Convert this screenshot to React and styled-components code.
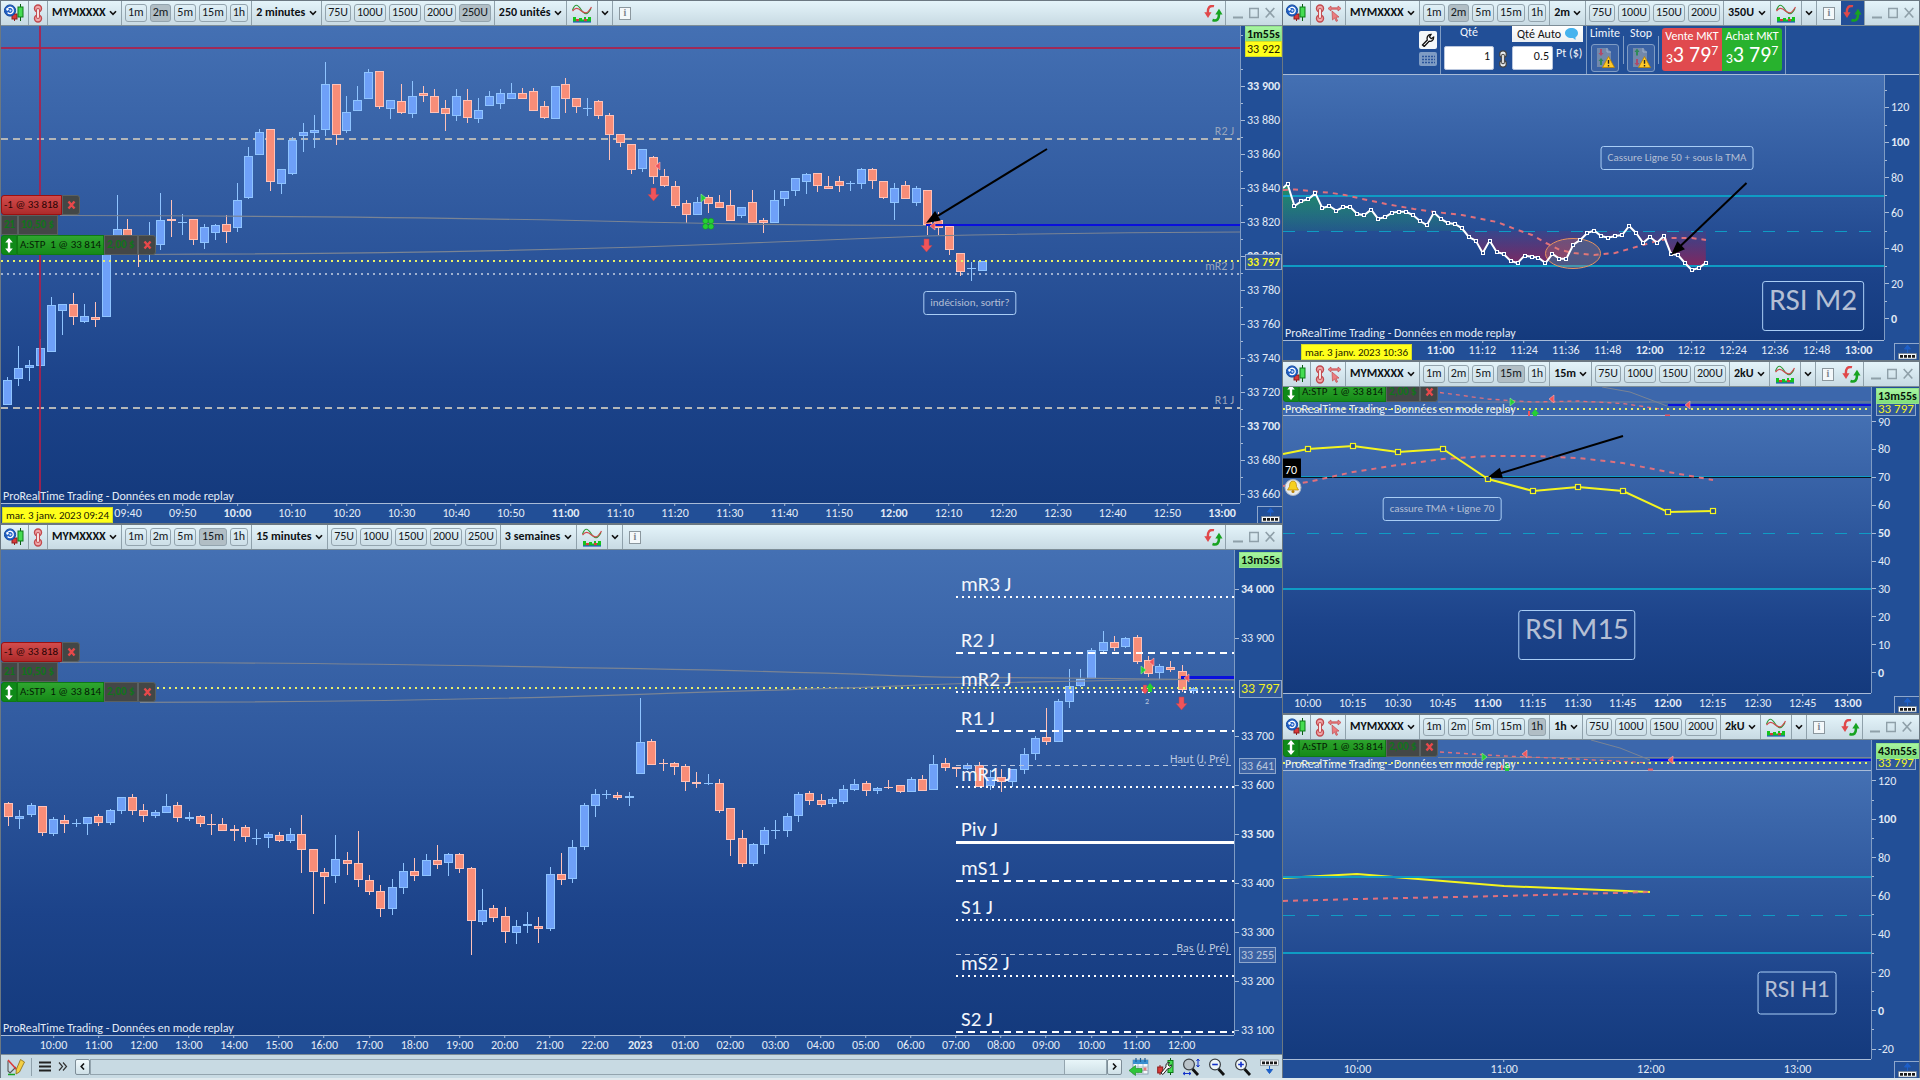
import React, { createContext, useContext } from "react";
import styled, { createGlobalStyle, css } from "styled-components";

const FONT = '"Carlito", "Lato", "Noto Sans", sans-serif';

const GlobalStyle = createGlobalStyle`
  *, *::before, *::after { box-sizing: border-box; }
  body { margin: 0; background: #6b7882; font: 12px/14px ${FONT}; color: #e3ebf6; }
  button, input, select { font: inherit; color: inherit; }
`;

/* ---------- workspace ---------- */

const Workspace = styled.main`
  display: grid;
  grid-template-columns: minmax(0, 1282fr) minmax(0, 637fr);
  column-gap: 1px;
  height: 100vh;
  padding-top: 1px;
  overflow: hidden;
  border-bottom: 2px solid #e0eaee;
`;

const Column = styled.div`
  display: grid;
  grid-template-rows: ${(p) => p.$rows};
  row-gap: 2px;
  min-height: 0;
`;

const WindowFrame = styled.section`
  display: flex;
  flex-direction: column;
  min-width: 0;
  min-height: 0;
  background: #224f97;
  border: solid #6b7882;
  border-width: ${(p) => (p.$edge === "left" ? "0 0 0 1px" : "0 1px 0 0")};
`;

/* ---------- toolbar ---------- */

const Toolbar = styled.header`
  display: flex;
  flex: none;
  height: 25px;
  color: #0c1014;
  background: linear-gradient(#e4f4fa, #c8dae3);
  border-bottom: 1px solid #7d8d97;
`;

const Cell = styled.div`
  display: flex;
  align-items: center;
  gap: ${(p) => p.$gap || 3}px;
  padding: 0 ${(p) => (p.$pad === undefined ? 4 : p.$pad)}px;
  border-right: ${(p) => (p.$open ? "none" : "1px solid #8fa1ab")};
  ${(p) => p.$active && css`background: #224f97;`}
`;

const Spacer = styled.div`
  flex: 1;
`;

const IconButton = styled.button`
  display: flex;
  align-items: center;
  justify-content: center;
  padding: 0;
  border: 0;
  background: none;
`;

const PresetButton = styled.button`
  height: 18px;
  padding: 0 2px 2px;
  line-height: 14px;
  color: #14181c;
  background: ${(p) => (p.$on ? "#b1bec5" : "transparent")};
  border: 1px solid #93a4ae;
  border-radius: 3px;
`;

const Picker = styled.label`
  display: grid;
  align-items: center;
  justify-items: end;
  > * { grid-area: 1 / 1; }
  svg { pointer-events: none; }
`;

const PickerSelect = styled.select`
  appearance: none;
  padding: 0 11px 2px 0;
  border: 0;
  background: none;
  font-weight: bold;
`;

const InfoButton = styled.button`
  width: 12px;
  height: 13px;
  padding: 0;
  font: bold 10px/10px "Liberation Serif", serif;
  color: #7b868d;
  background: #f4f8fa;
  border: 1px solid #8b979e;
`;

const Chevron = () => (
  <svg width="8" height="6" viewBox="0 0 8 6" fill="none" stroke="#111" strokeWidth="1.6">
    <path d="M1 1.2 4 4.4 7 1.2" />
  </svg>
);

const ReplayIcon = () => (
  <svg width="21" height="18" viewBox="0 0 21 18">
    <path d="M10.5 8v9" stroke="#8c1c1c" />
    <rect x="8" y="10" width="5" height="5" fill="#d93a3a" stroke="#8c1c1c" />
    <path d="M16.5 0v17" stroke="#0a5c12" />
    <rect x="14" y="3" width="5" height="10" fill="#45dc52" stroke="#0d7a18" />
    <circle cx="6" cy="6.5" r="5.6" fill="#1f5fc4" stroke="#164a9e" />
    <path d="M3 5.5a3.2 3.2 0 1 1 .6 3" fill="none" stroke="#fff" strokeWidth="1.3" />
    <path d="M1.8 4.2 3 7l2.4-1.6z" fill="#fff" />
    <circle cx="6.4" cy="6.6" r="1.1" fill="#cfe0ff" />
  </svg>
);

const ChainIcon = ({ color = "#c24a4e", fill = "#f0a8aa", width = 10, height = 19 }) => (
  <svg width={width} height={height} viewBox="0 0 10 19" fill="none">
    <rect x="1.5" y="1" width="7" height="7" rx="3.5" fill={fill} stroke={color} strokeWidth="1.4" />
    <rect x="1.5" y="11" width="7" height="7" rx="3.5" fill={fill} stroke={color} strokeWidth="1.4" />
    <rect x="3.6" y="4.5" width="2.8" height="10" rx="1.4" fill="#fff" stroke={color} strokeWidth="1.1" />
  </svg>
);

const LinkedCursorIcon = () => (
  <svg width="13" height="17" viewBox="0 0 13 17" fill="#ec7d80" stroke="#c24a4e" strokeWidth=".7">
    <path d="M0 3.5 3 1v1.8h7V1l3 2.5L10 6V4.2H3V6z" />
    <path d="m4 6 7 6-3 .3 1.6 3.5-1.4.6L6.6 13 4.5 15z" />
  </svg>
);

const IndicatorIcon = () => (
  <svg width="20" height="19" viewBox="0 0 20 19" fill="none">
    <path d="M.5 6C3-.5 5.500 0 9 5.500s6.500 6 10-1" stroke="#2f9a3a" strokeWidth="1.2" />
    <path d="M.5 7c3-3.500 5-3.500 9 0 4 3 6 3 10-4" stroke="#d0474a" strokeWidth="1.2" />
    <path d="M1 13h3v2h3v-1h3v1.500h2V13h2v2h2v-2h3v5H1z" fill="#14c21e" />
    <path d="M4 15h3v2.500H4zM12 15h3v2.500h-3z" fill="#d93a3a" />
    <path d="M1 18h18" stroke="#1f5fc4" strokeWidth="1.2" />
  </svg>
);

const SyncIcon = () => (
  <svg width="19" height="17" viewBox="0 0 19 17">
    <path d="M10 1.200C5.500.2 3.600 3 3.900 8" fill="none" stroke="#e0484a" strokeWidth="2.4" />
    <path d="M.3 7.200h7.200L4 13z" fill="#e0484a" />
    <path d="M8.500 15c4.500 1.600 6.700-1 6.400-6" fill="none" stroke="#17a321" strokeWidth="2.6" />
    <path d="M11.300 9.500h7.200L15 3.800z" fill="#17a321" />
  </svg>
);

const WindowGlyph = ({ kind }) => (
  <svg width="10" height="12" viewBox="0 0 10 12" fill="none" stroke="#8fa0a9" strokeWidth="1.4">
    {kind === "min" && <path d="M0 10.5h10" strokeWidth="2" />}
    {kind === "max" && <path d="M.7 1.5h8.600v9H.7z" />}
    {kind === "close" && <path d="m.7 1 8.600 9.500M9.300 1 .7 10.500" strokeWidth="1.6" />}
  </svg>
);

function Dropdown({ label, value }) {
  return (
    <Cell>
      <Picker>
        <PickerSelect aria-label={label} defaultValue={value}>
          <option>{value}</option>
        </PickerSelect>
        <Chevron />
      </Picker>
    </Cell>
  );
}

function WindowToolbar({ timeframe, timeframeLabel, units, unitPresets, activeUnit, linked, syncOn }) {
  return (
    <Toolbar>
      <Cell $pad={3}>
        <IconButton aria-label="Replay"><ReplayIcon /></IconButton>
      </Cell>
      <Cell>
        <IconButton aria-label="Lier"><ChainIcon /></IconButton>
        {linked && <IconButton aria-label="Curseur lié"><LinkedCursorIcon /></IconButton>}
      </Cell>
      <Dropdown label="Instrument" value="MYMXXXX" />
      <Cell $pad={3}>
        {["1m", "2m", "5m", "15m", "1h"].map((t) => (
          <PresetButton key={t} $on={t === timeframe}>{t}</PresetButton>
        ))}
      </Cell>
      <Dropdown label="Unité de temps" value={timeframeLabel} />
      <Cell $pad={3}>
        {unitPresets.map((u) => (
          <PresetButton key={u} $on={u === activeUnit}>{u}</PresetButton>
        ))}
      </Cell>
      <Dropdown label="Historique" value={units} />
      <Cell $pad={5}>
        <IconButton aria-label="Indicateurs"><IndicatorIcon /></IconButton>
      </Cell>
      <Cell $pad={3}>
        <IconButton aria-label="Plus"><Chevron /></IconButton>
      </Cell>
      <Cell $pad={6} $open>
        <InfoButton aria-label="Informations">i</InfoButton>
      </Cell>
      <Spacer />
      <Cell $pad={2} $active={syncOn}>
        <IconButton aria-label="Synchroniser"><SyncIcon /></IconButton>
      </Cell>
      <Cell $gap={6} $pad={7} $open>
        <IconButton aria-label="Réduire"><WindowGlyph kind="min" /></IconButton>
        <IconButton aria-label="Agrandir"><WindowGlyph kind="max" /></IconButton>
        <IconButton aria-label="Fermer"><WindowGlyph kind="close" /></IconButton>
      </Cell>
    </Toolbar>
  );
}

/* ---------- chart frame ---------- */

const Frame = createContext([0, 0, 1, 1]);
const pct = (v, start, size) => `${((v - start) / size) * 100}%`;

const Chart = styled.div`
  display: grid;
  grid-template-columns: minmax(0, 1fr) ${(p) => p.$axis}px;
  grid-template-rows: ${(p) => p.$rows || "minmax(0, 1fr) 20px"};
  flex: 1;
  min-height: 0;
`;

const PlotArea = styled.div`
  position: relative;
  overflow: hidden;
  min-height: 0;
  background: ${(p) =>
    p.$strip ? "#3c67ac" : "linear-gradient(#4470b3, #2a5399 50%, #1c438a 75%, #143a7d)"};
  ${(p) => p.$strip && css`box-shadow: inset 0 -1px #a9bcd8;`}
`;

const Drawing = styled.svg`
  position: absolute;
  inset: 0;
  width: 100%;
  height: 100%;
`;

const shift = { center: "translate(-50%, -50%)", left: "translate(0, -50%)", right: "translate(-100%, -50%)", top: "none" };

const Pin = styled.div`
  position: absolute;
  transform: ${(p) => shift[p.$align || "center"]};
  white-space: nowrap;
  color: ${(p) => p.$color || "inherit"};
  font-size: ${(p) => p.$size || 12}px;
  line-height: 1;
`;

function At({ x, y, children, ...rest }) {
  const [fx, fy, fw, fh] = useContext(Frame);
  return (
    <Pin {...rest} style={{ left: pct(x, fx, fw), top: pct(y, fy, fh) }}>
      {children}
    </Pin>
  );
}

const Watermark = styled.div`
  position: absolute;
  left: 2px;
  bottom: 0;
  line-height: 14px;
  white-space: nowrap;
`;

function Plot({ frame, strip, drawing, children }) {
  return (
    <Frame.Provider value={frame}>
      <PlotArea $strip={strip}>
        <Drawing viewBox={frame.join(" ")} preserveAspectRatio="none">{drawing}</Drawing>
        {children}
      </PlotArea>
    </Frame.Provider>
  );
}

const AxisY = styled.div`
  position: relative;
  border-left: 1px solid #7f9cc4;
`;

const AxisX = styled.div`
  position: relative;
  border-top: 1px solid #a9bcd8;
`;

const Corner = styled.div`
  display: flex;
  align-items: flex-end;
  justify-content: flex-end;
`;

const CornerButton = styled.button`
  display: flex;
  align-items: flex-end;
  justify-content: center;
  width: 25px;
  height: 17px;
  padding: 0;
  background: none;
  border: solid #8ea7cc;
  border-width: 1px 0 0 1px;
`;

const TickY = styled.div`
  position: absolute;
  left: 0;
  display: flex;
  align-items: center;
  height: 14px;
  transform: translateY(-50%);
  white-space: nowrap;
  font-weight: ${(p) => (p.$bold ? "bold" : "normal")};
  &::before {
    content: "";
    width: ${(p) => (p.$minor ? 2 : 4)}px;
    margin-right: 2px;
    border-top: 1px solid #a9bcd8;
  }
`;

const TickX = styled.div`
  position: absolute;
  top: 0;
  display: flex;
  flex-direction: column;
  align-items: center;
  transform: translateX(-50%);
  white-space: nowrap;
  font-weight: ${(p) => (p.$bold ? "bold" : "normal")};
  &::before {
    content: "";
    height: 2px;
    border-left: 1px solid #a9bcd8;
  }
`;

const tone = {
  green: css`color: #06140a; background: linear-gradient(#a8f5a0, #7fdf7c); border-color: #93e38c; font-weight: bold;`,
  yellow: css`color: #1a1a00; background: #ffff1a; border-color: #d5dc2a;`,
  last: css`color: #f4f41f; background: #30589c; border-color: #8ea7cc; font-weight: ${(p) => (p.$bold ? "bold" : "normal")};`,
  grey: css`color: #b9c6dd; background: #3c62a3; border-color: #8ea7cc;`,
};

const AxisTag = styled.div`
  position: absolute;
  left: 4px;
  height: ${(p) => p.$h || 16}px;
  padding: 0 1px;
  line-height: ${(p) => (p.$h || 16) - 2}px;
  white-space: nowrap;
  border: 1px solid;
  font-size: ${(p) => p.$size || 12}px;
  transform: translateY(-50%);
  ${(p) => tone[p.$tone]}
`;

const CursorTime = styled.div`
  position: absolute;
  bottom: 0;
  height: 16px;
  padding: 0 3px;
  font-size: 11px;
  line-height: 16px;
  white-space: nowrap;
  color: #1a1a00;
  background: #ffff1a;
  border: 1px solid #d5dc2a;
`;

function YAxis({ start, size, ticks, minor = [], tags = [] }) {
  return (
    <AxisY>
      {minor.map((y) => <TickY key={y} $minor style={{ top: pct(y, start, size) }} />)}
      {ticks.map(([y, text, bold]) => (
        <TickY key={text} $bold={bold} style={{ top: pct(y, start, size) }}>{text}</TickY>
      ))}
      {tags.map(({ y, text, ...t }) => (
        <AxisTag key={text} {...t} style={{ top: pct(y, start, size) }}>{text}</AxisTag>
      ))}
    </AxisY>
  );
}

function XAxis({ start, size, ticks, cursor }) {
  return (
    <AxisX>
      {ticks.map(([x, text, bold]) => (
        <TickX key={x} $bold={bold} style={{ left: pct(x, start, size) }}>{text}</TickX>
      ))}
      {cursor && <CursorTime style={{ left: pct(cursor[0], start, size) }}>{cursor[1]}</CursorTime>}
    </AxisX>
  );
}

const PanelGlyph = ({ down }) => (
  <svg width="19" height="15" viewBox="0 0 19 15">
    <path d={down ? "M9.5 7v7M6.5 10.5l3 4 3-4z" : "M9.5 8V1M6.5 4l3-4 3 4z"} fill="#1d5fc8" stroke="#1d5fc8" />
    <rect x=".5" y={down ? 1 : 8.5} width="18" height="5.5" fill="#f6f8fa" stroke="#6b7882" strokeWidth=".6" />
    <path d={down ? "M2 3.8h15" : "M2 11.3h15"} stroke="#1a1a1a" strokeWidth="2.8" strokeDasharray="3 1" />
  </svg>
);

const AxisCorner = () => (
  <Corner>
    <CornerButton aria-label="Afficher le panneau"><PanelGlyph /></CornerButton>
  </Corner>
);

/* ---------- orders and notes ---------- */

const OrderStack = styled.div`
  display: flex;
  flex-direction: column;
`;

const OrderRow = styled.div`
  display: flex;
  height: 20px;
  font-size: 11px;
  line-height: 18px;
`;

const OrderPart = styled.div`
  width: ${(p) => p.$w}px;
  padding: 0 2px;
  border: 1px solid;
  ${(p) => ({
    sell: css`color: #2a0404; background: linear-gradient(#d24c4c, #ad2b2b); border-color: #9c1010; border-radius: 3px 0 0 3px;`,
    buy: css`color: #041c04; background: linear-gradient(#2fa62f, #168a18); border-color: #0f7a14;`,
    muted: css`color: #10741a; background: #444746; border-color: #5a6060; font-weight: bold;`,
  }[p.$tone])}
`;

const DragHandle = styled.button`
  display: flex;
  align-items: center;
  justify-content: center;
  width: 16px;
  padding: 0;
  background: #0f8a18;
  border: 1px solid #0f7a14;
  border-radius: 3px 0 0 3px;
`;

const CloseOrder = styled.button`
  display: flex;
  align-items: center;
  justify-content: center;
  width: 18px;
  padding: 0;
  background: #434746;
  border: 1px solid #5a6060;
  border-radius: 0 3px 3px 0;
`;

const Note = styled.div`
  padding: ${(p) => p.$pad || "5px 6px"};
  color: #b4bfd4;
  line-height: ${(p) => (p.$size ? p.$size + 4 : 12)}px;
  font-size: ${(p) => p.$size || 11}px;
  border: 1px solid #a9cdf5;
  border-radius: 3px;
`;

const CloseGlyph = () => (
  <svg width="9" height="10" viewBox="0 0 9 10" stroke="#e8484a" strokeWidth="2.4">
    <path d="m1.500 1.500 6 7M7.500 1.500l-6 7" />
  </svg>
);

const StopOrder = () => (
  <OrderRow>
    <DragHandle aria-label="Déplacer l'ordre">
      <svg width="8" height="15" viewBox="0 0 8 15" fill="#fff">
        <path d="M4 0 7.800 4.500H5.200v6h2.600L4 15 .2 10.500h2.600v-6H.2z" />
      </svg>
    </DragHandle>
    <OrderPart $tone="buy" $w={87}>A:STP&nbsp; 1 @ 33 814</OrderPart>
    <OrderPart $tone="muted" $w={34}>2,00 $</OrderPart>
    <CloseOrder aria-label="Annuler l'ordre"><CloseGlyph /></CloseOrder>
  </OrderRow>
);

const Orders = () => (
  <OrderStack>
    <OrderRow>
      <OrderPart $tone="sell" $w={61}>-1 @ 33 818</OrderPart>
      <CloseOrder aria-label="Fermer la position"><CloseGlyph /></CloseOrder>
    </OrderRow>
    <OrderRow>
      <OrderPart $tone="muted" $w={17}>21</OrderPart>
      <OrderPart $tone="muted" $w={40}>10,50 $</OrderPart>
    </OrderRow>
    <StopOrder />
  </OrderStack>
);

/* ---------- drawing helpers ---------- */

const line = (pts) => "M" + pts.map((p) => p.join(" ")).join("L");

/* Each candle: high, body top, body bottom, low, direction (1 = up) */
function Candles({ data, x0, step }) {
  return data.map(([h, t, b, l, up], i) => {
    const x = Math.round(x0 + i * step - 0.5) + 0.5;
    const stroke = up ? "#8fc4ff" : "#ffc2b8";
    const bh = b - t;
    return (
      <g key={i} stroke={stroke}>
        <path d={`M${x} ${h}V${l}`} />
        {bh <= 1 ? (
          <path d={`M${x - 4.5} ${t + 0.5}h9`} />
        ) : (
          <rect x={x - 4} y={t + 0.5} width="8" height={Math.max(bh - 1, 1)} fill={up ? "#6ea0f8" : "#f88d78"} />
        )}
      </g>
    );
  });
}

const HLine = ({ y, x1, x2, color, w = 2, dash, opacity }) => (
  <path d={`M${x1} ${y}H${x2}`} stroke={color} strokeWidth={w} strokeDasharray={dash} opacity={opacity} />
);

const Arrow = ({ from, to }) => {
  const a = Math.atan2(to[1] - from[1], to[0] - from[0]);
  const at = (d, s) => [to[0] - d * Math.cos(a) + s * Math.sin(a), to[1] - d * Math.sin(a) - s * Math.cos(a)];
  return (
    <g>
      <path d={line([from, at(8, 0)])} stroke="#000" strokeWidth="2" />
      <path d={line([to, at(14, 5.5), at(14, -5.5)]) + "Z"} fill="#000" />
    </g>
  );
};

const DownArrow = ({ x, y, s = 1 }) => (
  <path transform={`translate(${x} ${y}) scale(${s})`} d="M-2.500 0h5v6.500h3L0 13l-5.500-6.500h3z" fill="#f0545a" stroke="#b8434f" strokeWidth=".5" />
);
const UpArrow = ({ x, y }) => <path transform={`translate(${x} ${y})`} d="M0 0l4 5H2v4h-4V5h-2z" fill="#25cf35" />;
const Flag = ({ x, y, green }) => (
  <path
    transform={`translate(${x} ${y})`}
    d={green ? "M-2-4 3 0l-5 4z" : "M2-4-3 0l5 4z"}
    fill={green ? "#25cf35" : "#f0545a"}
    stroke={green ? "#8df098" : "#ffb0b0"}
    strokeWidth=".6"
  />
);

const DOT = "2 4";
const DASH = "7 5";

/* ---------- data ---------- */

const candles2m = [
  [377,380,405,405,1],[346,368,379,386,1],[360,365,368,381,1],[339,348,366,368,1],[297,305,352,352,1],
  [304,304,311,335,1],[293,304,317,325,0],[304,316,322,323,1],[302,317,320,327,0],[250,250,317,317,1],
  [195,229,240,245,1],[219,229,240,245,0],[240,242,248,267,0],[222,240,248,262,1],[193,220,245,250,1],
  [200,219,221,237,0],[214,222,223,235,1],[219,219,240,245,0],[224,227,243,249,1],[224,225,233,240,1],
  [215,224,232,243,0],[183,200,228,232,1],[147,156,198,199,1],[129,132,155,155,1],[129,129,182,191,0],
  [169,169,184,194,1],[137,140,174,175,1],[123,132,136,152,1],[115,130,133,148,1],[62,84,130,136,1],
  [84,84,135,145,0],[96,112,131,133,1],[86,100,111,111,1],[69,72,99,99,1],[71,71,107,109,0],
  [100,100,109,119,1],[84,101,113,114,0],[81,96,114,118,1],[86,93,96,102,0],[89,96,113,113,0],
  [100,108,114,131,0],[89,96,116,121,1],[89,100,118,123,0],[98,110,119,123,1],[91,96,106,106,1],
  [89,93,104,109,1],[83,93,99,99,1],[88,93,99,99,0],[88,91,111,111,0],[101,106,118,119,0],
  [86,86,119,119,1],[78,84,99,113,0],[98,98,107,113,0],[98,108,109,116,1],[100,101,116,119,0],
  [113,115,135,160,0],[134,134,143,147,0],[144,144,170,174,0],[149,149,169,172,1],[156,157,177,184,0],
  [169,176,186,187,0],[181,186,206,208,0],[200,203,215,223,0],[197,202,215,215,1],[195,197,204,213,0],
  [195,202,208,208,0],[190,205,221,221,0],[207,207,216,218,1],[190,202,223,223,0],[218,220,223,233,0],
  [190,200,223,223,1],[191,191,199,206,1],[178,178,191,196,1],[173,174,182,194,1],[173,173,186,192,0],
  [176,186,189,189,0],[176,181,186,192,0],[181,183,184,191,1],[168,169,184,189,1],[168,169,181,189,0],
  [181,181,198,199,0],[183,188,203,220,1],[181,185,199,199,0],[186,188,203,206,1],[190,190,225,235,0],
  [212,220,228,235,0],[226,226,250,255,0],[253,253,272,276,0],[262,268,269,281,1],[261,261,271,271,1],
];

const candles15m = [
  [802,803,817,826,0],[810,816,819,829,1],[803,805,815,817,1],[806,806,833,836,0],[817,819,834,836,1],
  [815,820,824,833,0],[819,823,824,827,1],[817,817,824,835,1],[814,816,823,826,0],[809,810,823,825,1],
  [797,797,811,814,1],[794,797,811,815,0],[804,810,816,822,0],[810,812,816,818,1],[794,806,813,813,1],
  [802,805,818,822,0],[812,817,819,821,1],[815,816,824,827,0],[814,824,825,835,0],[818,824,831,831,0],
  [825,829,831,841,0],[825,827,837,842,0],[829,838,839,845,1],[832,834,838,848,1],[832,835,841,842,0],
  [828,834,841,843,1],[815,834,850,873,0],[849,849,872,914,0],[868,872,877,904,0],[835,859,876,883,1],
  [852,860,864,875,0],[831,863,880,887,0],[875,880,892,895,0],[885,891,909,917,0],[879,887,909,915,1],
  [863,871,888,894,1],[858,871,876,881,0],[854,860,876,876,1],[845,860,865,869,0],[853,854,863,876,1],
  [853,854,869,873,0],[867,868,921,955,0],[889,910,922,925,1],[905,908,918,922,0],[907,916,932,943,0],
  [920,926,933,944,1],[912,924,926,933,1],[917,926,929,943,0],[867,874,929,931,1],[853,874,880,885,0],
  [840,847,879,883,1],[803,805,847,850,1],[789,794,806,817,1],[790,794,795,799,1],[792,795,798,800,0],
  [792,796,798,806,1],[698,742,774,774,1],[739,741,765,765,0],[759,763,764,771,0],[762,763,767,775,0],
  [764,766,782,791,0],[772,782,784,788,0],[774,783,784,785,1],[779,783,811,813,0],[808,808,840,856,0],
  [830,838,864,867,0],[843,844,864,866,1],[827,830,845,854,1],[820,830,831,839,1],[813,816,831,837,1],
  [792,794,816,822,1],[791,793,801,805,0],[794,800,805,807,0],[797,799,804,807,1],[785,789,802,804,1],
  [779,784,790,791,1],[781,783,791,796,0],[787,788,791,794,1],[780,787,788,789,0],[785,785,792,793,0],
  [777,779,792,792,1],[775,779,791,791,0],[755,764,790,790,1],[758,763,768,771,0],[767,767,769,777,0],
  [763,765,769,770,1],[762,765,787,787,0],[770,777,786,790,1],[769,777,782,792,0],[769,769,782,787,1],
  [748,754,770,774,1],[736,738,754,760,1],[708,737,742,745,0],[699,701,742,742,1],[669,686,702,708,1],
  [669,679,686,687,1],[648,650,679,679,1],[631,642,651,654,1],[636,642,648,651,0],[637,638,647,648,1],
  [635,637,662,664,0],[656,660,674,677,0],[664,666,673,679,1],[661,667,670,672,0],[665,671,690,692,0],
  [687,688,691,694,1],
];

const rsi2m = [
  76.9,64.3,67.1,68.3,71.5,63.1,64.3,61.6,63.7,63.7,59.7,59.1,62.2,56.9,58,60.5,61,61,59.1,55.7,53.4,60.5,
  56.9,54.6,54,51.7,46.6,44.5,37.4,44.5,38,36.9,32.9,31.7,35.9,35.3,34.8,31.7,36.9,34.2,34.2,42.2,44.9,48.9,
  50.2,47.1,46.2,47.1,47.7,52.9,48.9,43.3,46.6,43.3,47.1,36.9,36.3,31.7,27.7,28.9,31.7,
];
const rsi2mPoints = rsi2m.map((v, i) => [1287.5 + (i * 418.3) / (rsi2m.length - 1), 196 + (70 - v) * 1.75]);

const rsi15m = [[1308,449],[1353,446],[1398,452],[1443,449],[1488,479],[1533,491],[1578,487],[1623,491],[1668,512],[1713,511]];

const pivots = [
  ["mR3 J", 597, DOT], ["R2 J", 653, DASH], ["mR2 J", 692, DOT], ["R1 J", 731, DASH], ["mR1 J", 787, DOT],
  ["Piv J", 842.5, null], ["mS1 J", 881, DASH], ["S1 J", 920, DOT], ["mS2 J", 976, DOT], ["S2 J", 1032, DASH],
];

const every = (n, start, step, f) => Array.from({ length: n }, (_, i) => f(start + i * step, i));
const hhmm = (m) => `${String(Math.floor(m / 60)).padStart(2, "0")}:${String(m % 60).padStart(2, "0")}`;

/* ---------- windows ---------- */

const REPLAY = "ProRealTime Trading - Données en mode replay";
const UNITS = ["75U", "100U", "150U", "200U"];

function PriceWindow2m() {
  return (
    <WindowFrame $edge="left">
      <WindowToolbar timeframe="2m" timeframeLabel="2 minutes" units="250 unités" unitPresets={[...UNITS, "250U"]} activeUnit="250U" />
      <Chart $axis={42}>
        <Plot
          frame={[1, 26, 1239, 477]}
          drawing={
            <g fill="none">
              <HLine y={139} x1={1} x2={1240} color="#b3b6b8" dash={DASH} />
              <HLine y={274} x1={1} x2={1240} color="#9fb1d0" dash={DOT} />
              <HLine y={408} x1={1} x2={1240} color="#b3b6b8" dash={DASH} />
              <Candles data={candles2m} x0={7.5} step={10.95} />
              <path d="M60 215.500C350 216 560 220 640 222S830 225.500 926 225.500H1240" stroke="#7a8494" strokeWidth="1.2" />
              <path d="M140 254.500C350 254 540 250 640 247S880 237 926 236 1100 232.500 1240 232" stroke="#7a8494" strokeWidth="1.2" />
              <HLine y={261} x1={1} x2={1240} color="#e8f06a" dash={DOT} />
              <HLine y={225} x1={926} x2={1240} color="#0a10dc" />
              <HLine y={48} x1={1} x2={1240} color="#b01e48" opacity=".85" />
              <path d="M40 26V503" stroke="#b01e48" strokeWidth="2" opacity=".85" />
              <Flag x={658} y={166} />
              <Flag x={703} y={198} green />
              <Flag x={933} y={226} />
              <DownArrow x={653.5} y={188} />
              <DownArrow x={926.5} y={239} />
              <g fill="#25cf35" stroke="#128a20" strokeWidth=".5">
                <circle cx="705.5" cy="221" r="2.8" /><circle cx="711" cy="221" r="2.8" />
                <circle cx="705.5" cy="226.5" r="2.8" /><circle cx="711" cy="226.5" r="2.8" />
              </g>
              <Arrow from={[1047, 149]} to={[926, 223]} />
            </g>
          }
        >
          <At x={1234} y={131} $align="right" $color="#9aa6bd">R2 J</At>
          <At x={1234} y={266} $align="right" $color="#9aa6bd">mR2 J</At>
          <At x={1234} y={400} $align="right" $color="#9aa6bd">R1 J</At>
          <At x={1} y={195} $align="top"><Orders /></At>
          <At x={970} y={303}><Note>indécision, sortir?</Note></At>
          <Watermark>{REPLAY}</Watermark>
        </Plot>
        <YAxis
          start={26}
          size={477}
          ticks={every(13, 86, 34, (y, i) => [y, `33 ${900 - i * 20}`, i % 5 === 0])}
          minor={every(14, 35, 34, (y) => y)}
          tags={[
            { y: 34, text: "1m55s", $tone: "green" },
            { y: 49, text: "33 922", $tone: "yellow" },
            { y: 262, text: "33 797", $tone: "last", $bold: true },
          ]}
        />
        <XAxis
          start={1}
          size={1239}
          ticks={every(21, 128, 54.7, (x, i) => [x, hhmm(580 + i * 10), (i - 2) % 6 === 0])}
          cursor={[2, "mar. 3 janv. 2023 09:24"]}
        />
        <AxisCorner />
      </Chart>
    </WindowFrame>
  );
}

const BottomBar = styled.footer`
  display: flex;
  flex: none;
  align-items: center;
  height: 24px;
  gap: 7px;
  padding-right: 3px;
  color: #222;
  background: #c8dae3;
  border-top: 1px solid #7d8d97;
`;

const ToolGroup = styled.div`
  display: flex;
  align-items: center;
  gap: 8px;
`;

const ScrollTrack = styled.div`
  display: flex;
  flex: 1;
  height: 16px;
  border: 1px solid #93a4ae;
`;

const ScrollThumb = styled.div`
  width: 42px;
  margin-left: auto;
  background: linear-gradient(#e8f5f9, #cfe0e7);
  border-left: 1px solid #93a4ae;
`;

const ScrollGroup = styled.div`
  display: flex;
  flex: 1;
  align-items: center;
`;

const ScrollButton = styled.button`
  display: flex;
  align-items: center;
  justify-content: center;
  width: 15px;
  height: 16px;
  padding: 0;
  background: linear-gradient(#f2fafc, #cfe0e7);
  border: 1px solid #7d8d97;
  border-radius: 2px;
`;

const Magnifier = ({ sign, arrows }) => (
  <svg width="18" height="18" viewBox="0 0 18 18" fill="none">
    <path d="m10.500 11 5.500 6" stroke="#111" strokeWidth="2.8" />
    <circle cx="7" cy="6.5" r="5.4" fill={arrows ? "#b9c2c8" : "#eef4f7"} stroke="#3a3f44" strokeWidth="1.2" />
    {sign && <path d={sign === "+" ? "M4.200 6.500h5.600M7 3.700v5.600" : "M4.200 6.500h5.600"} stroke="#1230c8" strokeWidth="1.6" />}
    {arrows && <path d="M16 1v8M14.500 3 16 1l1.500 2M14.500 7 16 9l1.500-2M1 15.500h8M3 14l-2 1.500L3 17M7 14l2 1.500L7 17" stroke="#1230c8" />}
  </svg>
);

function HistoryBar() {
  return (
    <BottomBar>
      <Cell $pad={6}>
        <IconButton aria-label="Outils de dessin">
          <svg width="18" height="18" viewBox="0 0 18 18" fill="none">
            <path d="M1 3v10l2 2 6-6" stroke="#555" strokeWidth="1.1" />
            <path d="m1 2 9 10" stroke="#d93a3a" strokeWidth="1.6" />
            <path d="M13.500 1.500 17.500 4l-5 10-3.500 2 .3-4.500z" fill="#f3cf45" stroke="#8a6a12" strokeWidth=".8" />
            <path d="M1 16.500h7" stroke="#17a321" strokeWidth="1.5" />
          </svg>
        </IconButton>
      </Cell>
      <IconButton aria-label="Liste">
        <svg width="12" height="11" viewBox="0 0 12 11" stroke="#222" strokeWidth="2"><path d="M0 1.500h12M0 5.500h12M0 9.500h12" /></svg>
      </IconButton>
      <IconButton aria-label="Déplier">
        <svg width="10" height="9" viewBox="0 0 10 9" fill="none" stroke="#333" strokeWidth="1.2"><path d="m1 .5 3.500 4L1 8.500M5 .5l3.500 4L5 8.500" /></svg>
      </IconButton>
      <ScrollGroup>
        <ScrollButton aria-label="Reculer">
          <svg width="5" height="7" viewBox="0 0 5 7" fill="none" stroke="#111" strokeWidth="1.6"><path d="M4 .5 1.200 3.500 4 6.500" /></svg>
        </ScrollButton>
        <ScrollTrack><ScrollThumb /></ScrollTrack>
        <ScrollButton aria-label="Avancer">
          <svg width="5" height="7" viewBox="0 0 5 7" fill="none" stroke="#111" strokeWidth="1.6"><path d="M1 .5 3.800 3.500 1 6.500" /></svg>
        </ScrollButton>
      </ScrollGroup>
      <ToolGroup>
        <IconButton aria-label="Aller à la date">
          <svg width="20" height="18" viewBox="0 0 20 18">
            <rect x="4" y="2" width="15" height="14" fill="#f3f8fb" stroke="#7b93a8" strokeWidth=".8" />
            <path d="M4 2h15v4H4z" fill="#3a8fd0" />
            <path d="M7 0v4M11.500 0v4M16 0v4" stroke="#1d5c94" strokeWidth="1.2" />
            <path d="M4 9h15M4 12.500h15M9 6v10M14 6v10" stroke="#9fb4c4" strokeWidth=".8" />
            <path d="M14.500 9.500h3v3h-3z" fill="#e2787a" />
            <path d="m0 12.500 6.500-5v3H13v4H6.500v3z" fill="#2fc53a" stroke="#15861f" strokeWidth=".6" />
          </svg>
        </IconButton>
        <IconButton aria-label="Réglages du graphique">
          <svg width="17" height="18" viewBox="0 0 17 18">
            <path d="M3 7v10" stroke="#8c1c1c" /><rect x=".7" y="9" width="5" height="6" fill="#d93a3a" stroke="#8c1c1c" />
            <path d="M13.500 0v17" stroke="#0a5c12" /><rect x="11" y="2.5" width="5" height="12" fill="#45dc52" stroke="#0d7a18" />
            <path d="m4 15 5-6c-.6-3 1-4.500 3.500-4.500L11 6.800l1.500 1.500 1.800-1.600c.4 2.500-1 4-3.400 3.800l-5 6z" fill="#fff" stroke="#222" />
          </svg>
        </IconButton>
        <IconButton aria-label="Zoom ajusté"><Magnifier arrows /></IconButton>
        <IconButton aria-label="Zoom arrière"><Magnifier sign="-" /></IconButton>
        <IconButton aria-label="Zoom avant"><Magnifier sign="+" /></IconButton>
        <IconButton aria-label="Masquer le panneau"><PanelGlyph down /></IconButton>
      </ToolGroup>
    </BottomBar>
  );
}

function PriceWindow15m() {
  return (
    <WindowFrame $edge="left">
      <WindowToolbar timeframe="15m" timeframeLabel="15 minutes" units="3 semaines" unitPresets={[...UNITS, "250U"]} />
      <Chart $axis={48} $rows="minmax(0, 1fr) 19px">
        <Plot
          frame={[1, 550, 1233, 485]}
          drawing={
            <g fill="none">
              <Candles data={candles15m} x0={8.5} step={11.285} />
              {pivots.map(([name, y, dash]) => (
                <HLine key={name} y={y} x1={956} x2={1234} color="#fff" dash={dash} w={dash ? 2 : 3} />
              ))}
              <HLine y={765.5} x1={956} x2={1234} color="#b9c6dd" dash="5 4" w={1} />
              <HLine y={954.5} x1={956} x2={1234} color="#b9c6dd" dash="5 4" w={1} />
              <HLine y={688} x1={157} x2={1234} color="#e8f06a" dash={DOT} />
              <path d="M60 662.300C200 662 400 664 640 668.700S900 677 966 677.300 1170 679 1234 680" stroke="#7a8494" strokeWidth="1.2" />
              <path d="M140 702.300C350 702 500 699 640 694.300S860 688 905 685.700 1100 680 1234 679" stroke="#7a8494" strokeWidth="1.2" />
              <HLine y={677.5} x1={1181} x2={1234} color="#0a10dc" w={3} />
              <Flag x={1143} y={670} green />
              <Flag x={1152} y={662} />
              <Flag x={1187} y={678} />
              <DownArrow x={1145} y={685} s={0.7} />
              <UpArrow x={1150} y={683} />
              <DownArrow x={1181.5} y={697} />
            </g>
          }
        >
          {pivots.map(([name, y]) => (
            <At key={name} x={961} y={Math.floor(y) - 13} $align="left" $size={21} $color="#f2f6fb">{name}</At>
          ))}
          <At x={1229} y={759} $align="right" $color="#b9c6dd">Haut (J, Pré)</At>
          <At x={1229} y={948} $align="right" $color="#b9c6dd">Bas (J, Pré)</At>
          <At x={1147} y={701} $size={8} $color="#b9c6dd">2</At>
          <At x={1} y={642} $align="top"><Orders /></At>
          <Watermark>{REPLAY}</Watermark>
        </Plot>
        <YAxis
          start={550}
          size={485}
          ticks={[34000, 33900, 33700, 33600, 33500, 33400, 33300, 33200, 33100].map((v) => [
            589 + (34000 - v) * 0.49,
            `${Math.floor(v / 1000)} ${String(v % 1000).padStart(3, "0")}`,
            v % 500 === 0,
          ])}
          tags={[
            { y: 560, text: "13m55s", $tone: "green" },
            { y: 689, text: "33 797", $tone: "last", $size: 14, $h: 18 },
            { y: 766, text: "33 641", $tone: "grey" },
            { y: 955, text: "33 255", $tone: "grey" },
          ]}
        />
        <XAxis
          start={1}
          size={1233}
          ticks={every(26, 53.5, 45.12, (x, i) => [x, i === 13 ? "2023" : hhmm((i < 13 ? 10 + i : i - 13) * 60), i === 13])}
        />
        <div />
      </Chart>
      <HistoryBar />
    </WindowFrame>
  );
}

/* ---------- order ticket ---------- */

const Ticket = styled.div`
  display: flex;
  flex: none;
  justify-content: center;
  height: 49px;
  color: #f2f6fb;
  background: #224f97;
  border-bottom: 1px solid #a9bcd8;
`;

const TicketGroup = styled.div`
  display: flex;
  gap: 3px;
  padding: 0 3px;
  border-right: 1px solid #7f9cc4;
`;

const TicketColumn = styled.div`
  display: flex;
  flex-direction: column;
  gap: ${(p) => p.$gap || 0}px;
  justify-content: ${(p) => p.$justify || "flex-start"};
  align-items: ${(p) => p.$items || "center"};
  padding: ${(p) => p.$pad || "0"};
`;

const ToolButton = styled.button`
  display: flex;
  align-items: center;
  justify-content: center;
  width: 18px;
  height: ${(p) => (p.$dim ? 14 : 18)}px;
  padding: 0;
  background: ${(p) => (p.$dim ? "#7f9cc4" : "#f4f8fa")};
  border: 0;
  border-radius: 2px;
`;

const FieldLabel = styled.label`
  height: 20px;
  line-height: 13px;
`;

const NumberField = styled.input`
  width: ${(p) => p.$w}px;
  height: 24px;
  padding: 0 3px 4px;
  text-align: right;
  color: #111;
  background: #fff;
  border: 1px solid #b9c6dd;
  border-radius: 2px;
`;

const AutoTab = styled.button`
  display: flex;
  align-items: center;
  justify-content: space-between;
  width: 71px;
  height: 16px;
  padding: 0 5px;
  color: #111;
  background: linear-gradient(#fff, #eceff1);
  border: 0;
`;

const FieldRow = styled.div`
  display: flex;
  gap: 3px;
`;

const OrderType = styled.button`
  display: flex;
  align-items: center;
  justify-content: center;
  width: 28px;
  height: 28px;
  padding: 0;
  background: #3a62a4;
  border: 1px solid #7f9cc4;
  border-radius: 3px;
`;

const Rule = styled.div`
  width: 1px;
  height: 28px;
  margin-top: 10px;
  background: #7f9cc4;
`;

const MarketPair = styled.div`
  display: flex;
  margin: 2px 0 3px;
`;

const MarketButton = styled.button`
  display: flex;
  flex-direction: column;
  align-items: center;
  width: 60px;
  padding: 1px 0 0;
  color: #fff;
  background: ${(p) => (p.$side === "sell" ? "#e04a4e" : "#28b22e")};
  border: 0;
  border-radius: ${(p) => (p.$side === "sell" ? "3px 0 0 3px" : "0 3px 3px 0")};
`;

const Quote = styled.span`
  display: flex;
  align-items: baseline;
  font-size: 22px;
  line-height: 24px;
`;

const QuoteSmall = styled.small`
  align-self: ${(p) => (p.$up ? "flex-start" : "flex-end")};
  font-size: 14px;
  line-height: 16px;
`;

const OrderGlyph = ({ flip }) => (
  <svg width="22" height="22" viewBox="0 0 22 22">
    <path d="M3 1h10l4 4v15H3z" fill="#7288ab" />
    <path d="M13 1v4h4" fill="none" stroke="#9db0cd" />
    <path d={flip ? "M6 8.500h2V5h1.500L7 1.500 4.500 5H6z" : "M6 2h2v4h1.500L7 9 4.500 6H6z"} fill={flip ? "#2f8a5a" : "#b04a6a"} />
    <path d={flip ? "M6 12h2v4h1.500L7 19l-2.500-3H6z" : "M6 18h2v-4h1.500L7 11l-2.500 3H6z"} fill={flip ? "#b04a6a" : "#2f8a5a"} />
    <path d="m14.500 9.500 6 11h-12z" fill="#ffc928" stroke="#b98200" strokeWidth=".8" />
    <path d="M14.500 13v3.800M14.500 18v1.500" stroke="#222" strokeWidth="1.4" />
  </svg>
);

function OrderTicket() {
  return (
    <Ticket>
      <TicketGroup>
        <TicketColumn $gap={3} $pad="5px 0 0">
          <ToolButton aria-label="Réglages">
            <svg width="14" height="14" viewBox="0 0 14 14" fill="#fff" stroke="#111" strokeWidth="1.3">
              <path d="m1.500 12 4.800-5C5.500 4 7 1.500 10 1.500L8.500 4l1.700 1.700 2.400-1.500c.2 3-2 4.500-4.500 4L3.200 13.500z" />
            </svg>
          </ToolButton>
          <ToolButton $dim aria-label="Clavier">
            <svg width="15" height="11" viewBox="0 0 15 11" fill="none" stroke="#2a549b" strokeWidth="1.6" strokeDasharray="2 1">
              <path d="M1 2.500h13M1 5.500h13M1 8.500h13" />
            </svg>
          </ToolButton>
        </TicketColumn>
      </TicketGroup>
      <TicketGroup>
        <TicketColumn>
          <FieldLabel htmlFor="quantity">Qté</FieldLabel>
          <NumberField id="quantity" $w={50} defaultValue="1" />
        </TicketColumn>
        <TicketColumn $justify="flex-end" $pad="0 0 6px">
          <ChainIcon color="#444" fill="#e8ecef" width={12} height={18} />
        </TicketColumn>
        <TicketColumn $items="flex-start" $gap={4}>
          <AutoTab>
            Qté Auto
            <svg width="13" height="12" viewBox="0 0 13 12"><path d="M6.500 0C10 0 13 2 13 5c0 2-1 3.500-2.500 4.200V12L8 10C3 10.500 0 8 0 5s3-5 6.500-5z" fill="#45b3ee" /></svg>
          </AutoTab>
          <FieldRow>
            <NumberField id="point-value" $w={41} defaultValue="0.5" />
            <label htmlFor="point-value">Pt ($)</label>
          </FieldRow>
        </TicketColumn>
      </TicketGroup>
      <TicketGroup>
        <TicketColumn $gap={4}>
          <span>Limite</span>
          <OrderType aria-label="Limite"><OrderGlyph /></OrderType>
        </TicketColumn>
        <Rule />
        <TicketColumn $gap={4}>
          <span>Stop</span>
          <OrderType aria-label="Stop"><OrderGlyph flip /></OrderType>
        </TicketColumn>
        <Rule />
        <MarketPair>
          {[["sell", "Vente MKT"], ["buy", "Achat MKT"]].map(([side, title]) => (
            <MarketButton key={side} $side={side}>
              {title}
              <Quote><QuoteSmall>3</QuoteSmall>3 79<QuoteSmall $up>7</QuoteSmall></Quote>
            </MarketButton>
          ))}
        </MarketPair>
      </TicketGroup>
    </Ticket>
  );
}

/* ---------- RSI windows ---------- */

const CYAN = "#0f9cc4";
const TMA = "#e0707c";

function Rsi2mWindow() {
  const last = rsi2mPoints[rsi2mPoints.length - 1];
  const curve = [[1283, 188], ...rsi2mPoints];
  const area = line([[1283, 231], ...curve, [last[0], 231]]) + "Z";
  return (
    <WindowFrame>
      <WindowToolbar linked syncOn timeframe="2m" timeframeLabel="2m" units="350U" unitPresets={UNITS} />
      <OrderTicket />
      <Chart $axis={35}>
        <Plot
          frame={[1283, 75, 601, 265]}
          drawing={
            <g fill="none">
              <defs>
                <linearGradient id="gain" x1="0" y1="184" x2="0" y2="231" gradientUnits="userSpaceOnUse">
                  <stop offset="0" stopColor="#1a9a5a" stopOpacity=".85" /><stop offset="1" stopColor="#1a9a5a" stopOpacity=".15" />
                </linearGradient>
                <linearGradient id="loss" x1="0" y1="231" x2="0" y2="272" gradientUnits="userSpaceOnUse">
                  <stop offset="0" stopColor="#9a2060" stopOpacity=".15" /><stop offset="1" stopColor="#9a2050" stopOpacity=".9" />
                </linearGradient>
                <clipPath id="above"><rect x="1283" y="75" width="260" height="156" /></clipPath>
                <clipPath id="below"><rect x="1283" y="231" width="601" height="35" /></clipPath>
              </defs>
              <path d={area} fill="url(#gain)" clipPath="url(#above)" />
              <path d={area} fill="url(#loss)" clipPath="url(#below)" />
              <HLine y={196} x1={1283} x2={1884} color={CYAN} />
              <HLine y={231.5} x1={1283} x2={1872} color={CYAN} w={1} dash="12 12" />
              <HLine y={266} x1={1283} x2={1884} color={CYAN} />
              <path
                d="M1283 190 1295 189.500 1311 191 1332 193 1345 195 1358 198 1386 204 1414 209 1428 211 1448 213.500 1462 215 1477 218 1497 222 1515 229 1532 235 1546 243 1560 250 1574 253 1594 255 1615 253 1629 249 1643 245 1657 241 1671 238 1692 238 1706 240"
                stroke={TMA} strokeWidth="2" strokeDasharray="5 5"
              />
              <ellipse cx="1573" cy="253.5" rx="27.5" ry="15" fill="#e08a6a" fillOpacity=".25" stroke="#e8935f" />
              <path d={line(curve)} stroke="#fff" strokeWidth="2" />
              {rsi2mPoints.map(([x, y]) => (
                <rect key={x} x={Math.round(x) - 1.5} y={Math.round(y) - 1.5} width="3" height="3" fill="#2a4c8c" stroke="#fff" />
              ))}
              <Arrow from={[1746.5, 183]} to={[1671, 255]} />
            </g>
          }
        >
          <At x={1677} y={158}><Note>Cassure Ligne 50 + sous la TMA</Note></At>
          <At x={1813} y={306}><Note $size={31} $pad="0 6px 13px">RSI M2</Note></At>
          <Watermark>{REPLAY}</Watermark>
        </Plot>
        <YAxis
          start={75}
          size={265}
          ticks={every(7, 107, 35.3, (y, i) => [y, `${120 - i * 20}`, i === 1 || i === 6])}
          minor={every(7, 90, 35.3, (y) => y)}
        />
        <XAxis
          start={1283}
          size={601}
          ticks={every(11, 1440.5, 41.8, (x, i) => [x, hhmm(660 + i * 12), i % 5 === 0])}
          cursor={[1301, "mar. 3 janv. 2023 10:36"]}
        />
        <AxisCorner />
      </Chart>
    </WindowFrame>
  );
}

const ThresholdTag = styled.div`
  width: 18px;
  height: 19px;
  line-height: 22px;
  padding-left: 2px;
  color: #fff;
  background: #000;
`;

const TWO_PANES = (top, bottom) => `${top}px minmax(0, 1fr) ${bottom}px`;

function Rsi15mWindow() {
  return (
    <WindowFrame>
      <WindowToolbar linked timeframe="15m" timeframeLabel="15m" units="2kU" unitPresets={UNITS} />
      <Chart $axis={48} $rows={TWO_PANES(29, 20)}>
        <Plot
          strip
          frame={[1283, 387, 588, 29]}
          drawing={
            <g fill="none">
              <path d="M1438 402H1871M1602 387 1630 392 1667 406" stroke="#7a8494" />
              <path d="M1440 392.500 1488 399 1533 402 1578 401 1623 403.500 1660 409" stroke={TMA} strokeWidth="1.3" strokeDasharray="4 4" />
              <HLine y={409} x1={1283} x2={1871} color="#e8f06a" dash={DOT} />
              <HLine y={405} x1={1668} x2={1871} color="#0a10dc" />
              <Flag x={1512} y={402} green /><Flag x={1552} y={399} /><Flag x={1688} y={405} />
              <UpArrow x={1535} y={409} /><path d="M1529 411v5M1665 415.500h5" stroke="#f0545a" strokeWidth="2" />
            </g>
          }
        >
          <At x={1283} y={382} $align="top"><StopOrder /></At>
          <Watermark>{REPLAY}</Watermark>
        </Plot>
        <YAxis
          start={387}
          size={29}
          ticks={[]}
          tags={[
            { y: 409, text: "33 797", $tone: "last", $h: 14, $size: 13 },
            { y: 396, text: "13m55s", $tone: "green" },
          ]}
        />
        <Plot
          frame={[1283, 416, 588, 277]}
          drawing={
            <g fill="none">
              <HLine y={476.5} x1={1283} x2={1871} color={CYAN} w={1} />
              <HLine y={477.5} x1={1283} x2={1871} color="#0a1420" w={1} />
              <HLine y={533.5} x1={1283} x2={1871} color={CYAN} w={1} dash="12 12" />
              <HLine y={589} x1={1283} x2={1871} color={CYAN} />
              <path d="M1283 486 1308 482 1353 472 1398 465 1443 459 1488 456 1533 456 1578 458 1623 463 1668 472 1713 480" stroke={TMA} strokeWidth="2" strokeDasharray="5 5" />
              <path d={line([[1283, 454], ...rsi15m])} stroke="#f4f41f" strokeWidth="2" />
              {rsi15m.map(([x, y]) => (
                <rect key={x} x={x - 2.5} y={y - 2.5} width="5" height="5" fill="#2a4c8c" stroke="#f4f41f" strokeWidth="1.2" />
              ))}
              <Arrow from={[1623, 436]} to={[1488, 477]} />
              <circle cx="1293" cy="487.5" r="8" fill="#e6eaee" stroke="#a9b4c0" />
              <path d="M1293 481c-3 0-3.500 3-3.500 5.500l-2 3.500h11l-2-3.500c0-2.500-.5-5.500-3.500-5.500z" fill="#f7d020" stroke="#b98200" strokeWidth=".7" />
              <circle cx="1293" cy="491.5" r="1.5" fill="#b98200" />
            </g>
          }
        >
          <At x={1292} y={468}><ThresholdTag>70</ThresholdTag></At>
          <At x={1442} y={509}><Note>cassure TMA + Ligne 70</Note></At>
          <At x={1577} y={635}><Note $size={31} $pad="0 6px 13px">RSI M15</Note></At>
        </Plot>
        <YAxis start={416} size={277} ticks={every(10, 421.5, 27.9, (y, i) => [y, `${90 - i * 10}`, i === 4 || i === 9])} />
        <XAxis start={1283} size={588} ticks={every(13, 1307.7, 45, (x, i) => [x, hhmm(600 + i * 15), i > 0 && i % 4 === 0])} />
        <AxisCorner />
      </Chart>
    </WindowFrame>
  );
}

function Rsi1hWindow() {
  return (
    <WindowFrame>
      <WindowToolbar linked timeframe="1h" timeframeLabel="1h" units="2kU" unitPresets={UNITS} />
      <Chart $axis={48} $rows={TWO_PANES(31, 19)}>
        <Plot
          strip
          frame={[1283, 740, 588, 31]}
          drawing={
            <g fill="none">
              <path d="M1438 757.500H1871M1591 740 1620 748 1650 760" stroke="#7a8494" />
              <path d="M1440 752 1504 756 1577 759 1650 763" stroke={TMA} strokeWidth="1.3" strokeDasharray="4 4" />
              <HLine y={763} x1={1283} x2={1871} color="#e8f06a" dash={DOT} />
              <HLine y={760} x1={1650} x2={1871} color="#0a10dc" />
              <Flag x={1484} y={757} green /><Flag x={1525} y={754} /><Flag x={1671} y={760} />
              <UpArrow x={1507} y={763} /><path d="M1502 765v5M1648 769.500h5" stroke="#f0545a" strokeWidth="2" />
            </g>
          }
        >
          <At x={1283} y={737} $align="top"><StopOrder /></At>
          <Watermark>{REPLAY}</Watermark>
        </Plot>
        <YAxis
          start={740}
          size={31}
          ticks={[]}
          tags={[
            { y: 763, text: "33 797", $tone: "last", $h: 14, $size: 13 },
            { y: 751, text: "43m55s", $tone: "green" },
          ]}
        />
        <Plot
          frame={[1283, 771, 588, 288]}
          drawing={
            <g fill="none">
              <path d="M1283 878 1357 874 1504 886 1650 892" stroke="#f4f41f" strokeWidth="2" />
              <path d="M1283 901 1357 899 1504 896 1650 892" stroke={TMA} strokeWidth="2" strokeDasharray="5 5" />
              <HLine y={877} x1={1283} x2={1871} color={CYAN} />
              <HLine y={915.5} x1={1283} x2={1871} color={CYAN} w={1} dash="12 12" />
              <HLine y={953} x1={1283} x2={1871} color={CYAN} />
            </g>
          }
        >
          <At x={1797} y={993}><Note $size={25} $pad="1px 6px 11px">RSI H1</Note></At>
        </Plot>
        <YAxis
          start={771}
          size={288}
          ticks={every(8, 781, 38.3, (y, i) => [y, `${120 - i * 20}`, i === 1 || i === 6])}
          minor={every(7, 800, 38.3, (y) => y)}
        />
        <XAxis start={1283} size={588} ticks={every(4, 1357.5, 146.7, (x, i) => [x, hhmm(600 + i * 60)])} />
        <AxisCorner />
      </Chart>
    </WindowFrame>
  );
}

export default function App() {
  return (
    <>
      <GlobalStyle />
      <Workspace>
        <Column $rows="minmax(0, 522fr) minmax(0, 553fr)">
          <PriceWindow2m />
          <PriceWindow15m />
        </Column>
        <Column $rows="minmax(0, 359fr) minmax(0, 351fr) minmax(0, 363fr)">
          <Rsi2mWindow />
          <Rsi15mWindow />
          <Rsi1hWindow />
        </Column>
      </Workspace>
    </>
  );
}
